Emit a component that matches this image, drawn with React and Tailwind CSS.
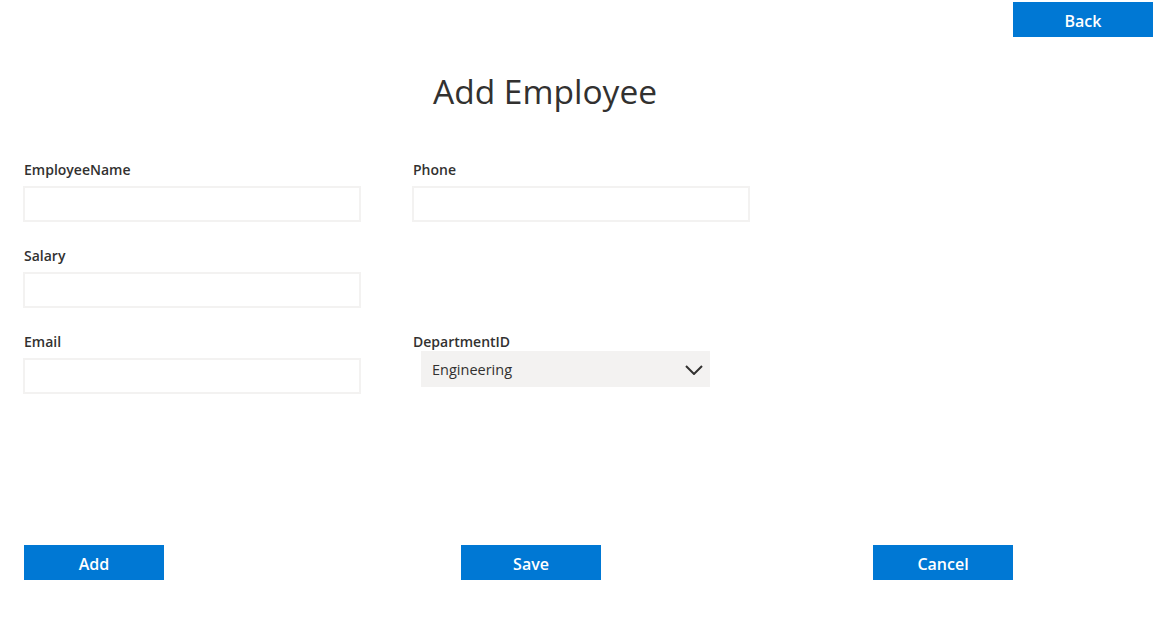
import React from 'react';

const font = { fontFamily: '"Open Sans", "Noto Sans", sans-serif' };

function Field({ label, children }) {
  return (
    <div className="flex flex-col">
      <label className="h-5 pl-[1px] text-[14px] leading-5 font-semibold text-[#323130]">{label}</label>
      {children}
    </div>
  );
}

function TextInput() {
  return (
    <input
      type="text"
      className="mt-[6px] h-9 w-[338px] border-2 border-[#f3f2f1] bg-white px-2 text-[14px] outline-none"
    />
  );
}

function Button({ children, className = '' }) {
  return (
    <button
      className={`h-[35px] w-[140px] bg-[#0078d4] pt-[2px] text-[16px] font-semibold text-white ${className}`}
    >
      {children}
    </button>
  );
}

export default function App() {
  return (
    <div className="min-h-[633px] w-full bg-white text-[#323130]" style={font}>
      {/* top bar */}
      <div className="flex justify-end pt-[2px] pr-[9px]">
        <Button className="h-[34px]">Back</Button>
      </div>

      {/* title */}
      <h1 className="mt-[32px] w-[1090px] text-center text-[33.5px] leading-[44px] font-normal text-[#323130]">
        Add Employee
      </h1>

      {/* form */}
      <div className="mt-[47px] ml-[23px] grid grid-cols-[338px_338px] gap-x-[51px] gap-y-[24px]">
        <Field label="EmployeeName">
          <TextInput />
        </Field>
        <Field label="Phone">
          <TextInput />
        </Field>
        <Field label="Salary">
          <TextInput />
        </Field>
        <div />
        <Field label="Email">
          <TextInput />
        </Field>
        <Field label="DepartmentID">
          <div className="-mt-[1px] ml-[9px] flex h-9 w-[289px] items-center justify-between bg-[#f3f2f1] pt-[1px] pl-[11px] pr-[7px] text-[14.5px] text-[#323130]">
            <span>Engineering</span>
            <svg width="18" height="10" viewBox="0 0 18 10" fill="none">
              <path d="M1 1l8 8 8-8" stroke="#323130" strokeWidth="2" />
            </svg>
          </div>
        </Field>
      </div>

      {/* actions */}
      <div className="mt-[151px] ml-[24px] flex">
        <Button>Add</Button>
        <Button className="ml-[297px]">Save</Button>
        <Button className="ml-[272px]">Cancel</Button>
      </div>
    </div>
  );
}
